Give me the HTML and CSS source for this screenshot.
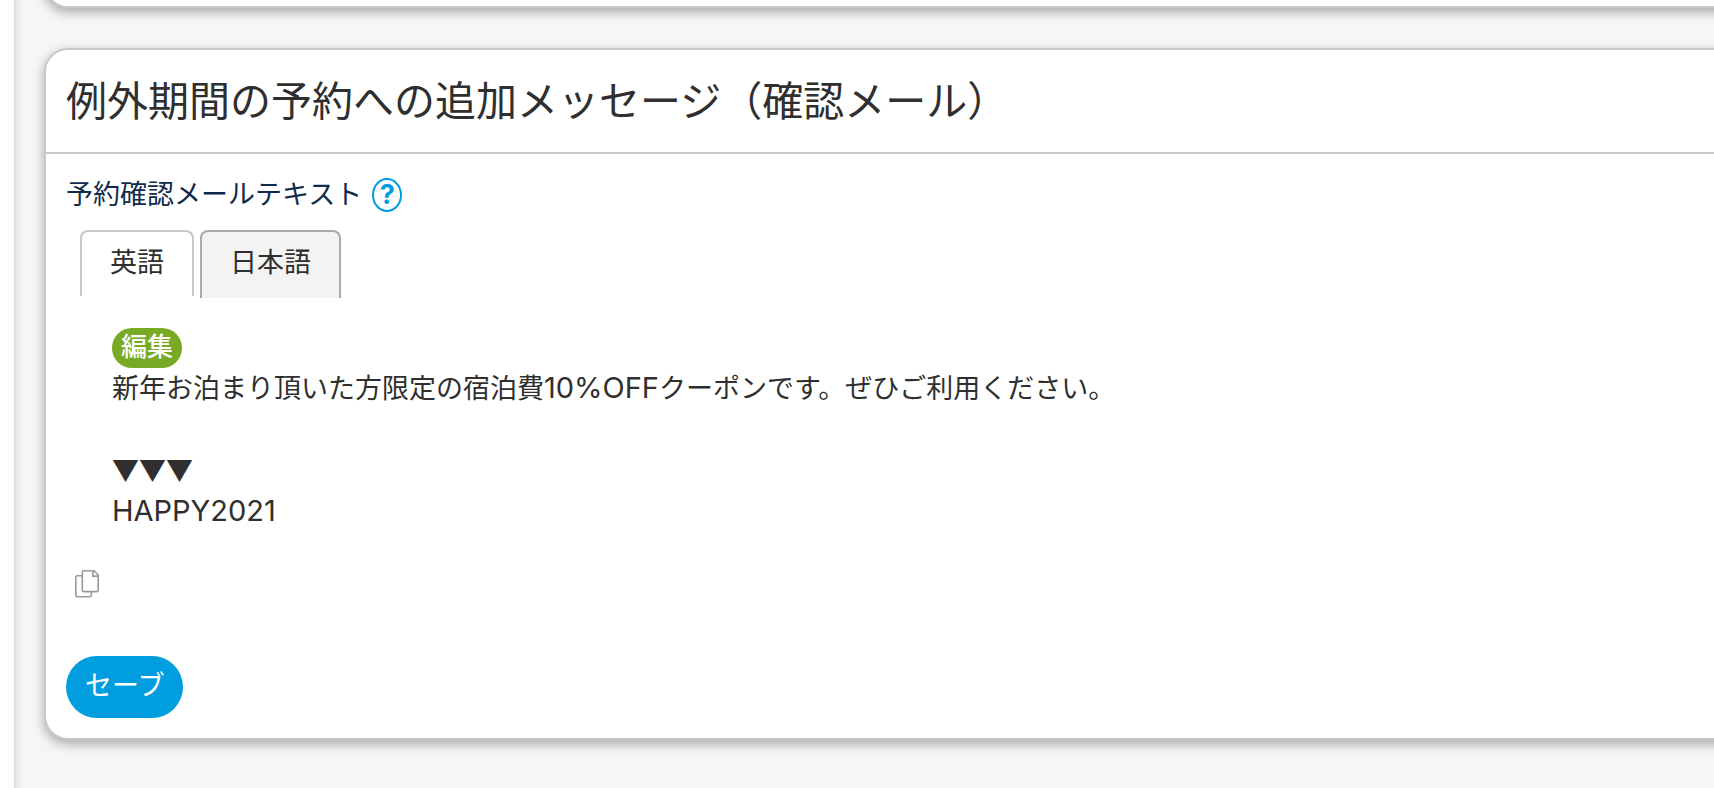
FILE: index.html
```
<!DOCTYPE html>
<html lang="ja">
<head>
    <meta charset="UTF-8">
    <meta name="viewport" content="width=device-width, initial-scale=1.0">
    <title>例外期間の予約への追加メッセージ</title>
    <link rel="stylesheet" href="styles.css">
</head>
<body>
    <main class="page">
        <section class="card card-previous"></section>

        <section class="card">
            <h1 class="card-title">例外期間の予約への追加メッセージ（確認メール）</h1>
            <form class="card-body">
                <div class="field-label">
                    <span>予約確認メールテキスト</span>
                    <button type="button" class="help">?</button>
                </div>

                <div class="tabs" role="tablist">
                    <button type="button" class="tab tab-active" role="tab" aria-selected="true">英語</button>
                    <button type="button" class="tab" role="tab" aria-selected="false">日本語</button>
                </div>

                <div class="message">
                    <button type="button" class="edit">編集</button>
                    <p class="text">新年お泊まり頂いた方限定の宿泊費<span class="latin">10%OFF</span>クーポンです。ぜひご利用ください。<br><br><span class="marks">▼▼▼</span><br><span class="latin">HAPPY2021</span></p>
                </div>

                <button type="button" class="copy" aria-label="コピー">
                    <svg width="24" height="28" viewBox="0 0 24 28" fill="none" stroke="#999" stroke-width="1.6">
                        <path d="M7 5.7H2.2Q.8 5.7 .8 7.1V25.2Q.8 26.7 2.2 26.7H14.8Q16.3 26.7 16.3 25.2V21.6"/>
                        <path d="M8.8 .8H19L23.2 5V20.1Q23.2 21.6 21.8 21.6H8.8Q7.3 21.6 7.3 20.1V2.2Q7.3 .8 8.8 .8Z"/>
                        <path d="M17.9 .8V6.1H23.2"/>
                    </svg>
                </button>

                <button type="submit" class="save">セーブ</button>
            </form>
        </section>
    </main>
</body>
</html>
```

FILE: styles.css
```
/* styles.css */
* {
    box-sizing: border-box;
}

body {
    margin: 0;
    padding-left: 14px;
    background-color: white;
    color: #2f2f2f;
    font-family: Inter, "Noto Sans CJK JP", sans-serif;
    font-size: 27px;
    line-height: 41px;
}

button {
    font: inherit;
    color: inherit;
    border: none;
    background: none;
    padding: 0;
    cursor: pointer;
}

.page {
    min-height: 100vh;
    padding-left: 30px;
    background: linear-gradient(to right, #dadada, #ececec 4px, #f6f6f6 10px);
    overflow: hidden;
}

/* cards run off the right edge of the window */
.card {
    margin-right: -40px;
    margin-bottom: 40px;
    border: 2px solid #c8c8c8;
    border-radius: 24px;
    background-color: white;
    box-shadow: 0 4px 12px rgba(0, 0, 0, 0.32);
}

.card-previous {
    height: 48px;
    margin-top: -40px;
}

.card-title {
    margin: 0;
    padding: 21px 20px;
    border-bottom: 2px solid #c8c8c8;
    font-size: 41px;
    font-weight: 400;
    line-height: 60px;
}

.card-body {
    display: flex;
    flex-direction: column;
    align-items: flex-start;
    padding: 20px;
}

.field-label {
    display: flex;
    align-items: center;
    gap: 10px;
    color: #0f2a4a;
}

.help {
    width: 30px;
    height: 34px;
    border: 2px solid #009ddf;
    border-radius: 50%;
    color: #009ddf;
    font-weight: 700;
    line-height: 30px;
}

.tabs {
    display: flex;
    align-items: flex-start;
    gap: 6px;
    margin: 15px 14px 0;
}

.tab {
    height: 68px;
    padding: 0 28px 6px;
    border: 2px solid #aaa;
    border-bottom: none;
    border-radius: 8px 8px 0 0;
    background-color: #f3f3f3;
}

.tab-active {
    height: 66px;
    padding-bottom: 4px;
    border-color: #c8c8c8;
    background-color: white;
}

.message {
    padding: 30px 46px 0;
}

.edit {
    display: block;
    height: 40px;
    padding: 0 9px 2px;
    border-radius: 20px;
    background-color: #78aa26;
    color: white;
    font-size: 26px;
    font-weight: 500;
    line-height: 38px;
}

.text {
    margin: 0;
}

.latin {
    font-size: 29px;
    line-height: 1;
}

.marks {
    font-family: "Noto Sans CJK JP", sans-serif;
    line-height: 1;
}

.copy {
    margin: 38px 9px 58px;
    line-height: 0;
}

.save {
    height: 62px;
    padding: 0 19px 4px;
    border-radius: 31px;
    background-color: #009ddf;
    color: white;
}
```
